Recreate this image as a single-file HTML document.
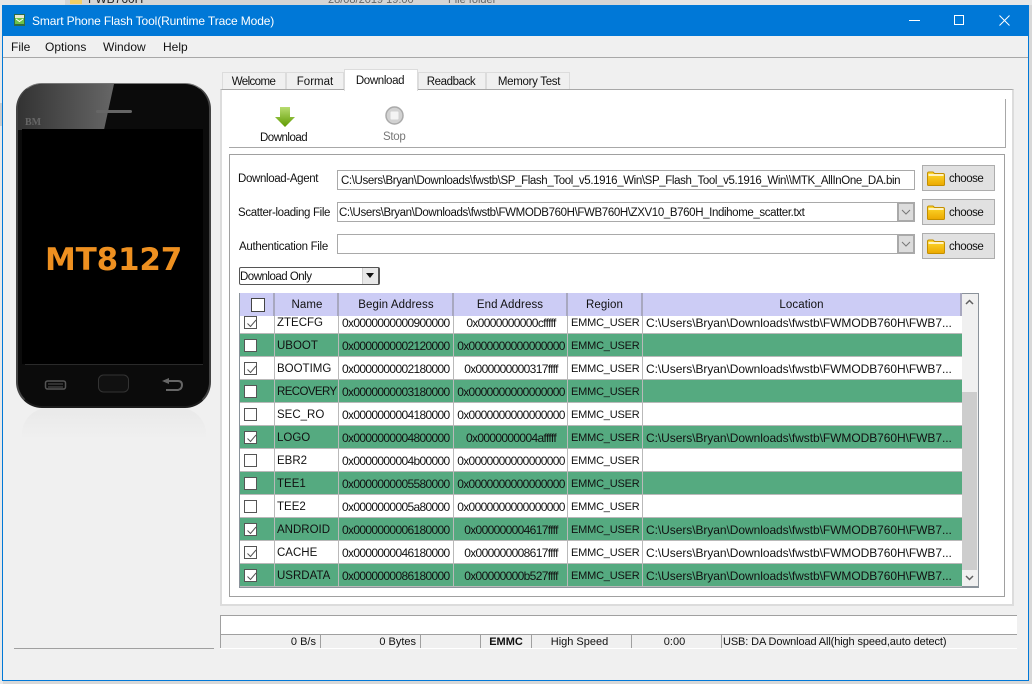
<!DOCTYPE html>
<html><head><meta charset="utf-8"><style>
html,body{margin:0;padding:0;width:1032px;height:684px;overflow:hidden;background:#d8d8d8;font-family:"Liberation Sans",sans-serif;font-size:12px;color:#111}
div,span,svg{position:absolute;box-sizing:border-box}
.t{white-space:nowrap;line-height:14px}
.tab{background:#f0f0f0;border:1px solid #dcdcdc;border-bottom:none;text-align:center;line-height:18px;font-size:11.5px;top:72px;height:17px}
.in{background:#fff;border:1px solid #a9a9a9;height:20px;left:337px;width:578px;line-height:20px;padding-left:3px;white-space:nowrap;overflow:hidden;font-size:11.5px;letter-spacing:-.38px}
.dd{left:897px;width:18px;background:#dcdcdc;border:2px solid #a9a9a9;height:20px}
.btn{left:922px;width:73px;height:26px;background:#e1e1e1;border:1px solid #adadad;line-height:27px;padding-left:26px;font-size:11.5px;letter-spacing:-.45px}
.r{left:0;width:722px;height:23px;background:#fff;border-bottom:1px solid #b9b9b9}
.g{background:#55aa80}
.r span{top:1px;line-height:22px;white-space:nowrap;height:22px}
.n{left:37px;font-size:11.5px}.b{left:102px;letter-spacing:-.66px;font-size:12px}.e{left:216px;width:110px;text-align:center;letter-spacing:-.66px;font-size:12px}.m{left:331px;font-size:11px;letter-spacing:-.2px}.l{left:406px;font-size:12px;letter-spacing:-.06px}
.c{left:34px;width:1px;height:22px;background:#b9b9b9}
.x{left:4px;top:5px;width:13px;height:13px;background:#fff;border:1px solid #555}
.x svg{left:1px;top:1px}
.h{top:293px;height:23px;background:#ccccf5;border-right:2px solid #a8a8c0;text-align:center;line-height:25px;font-size:11.5px;letter-spacing:.1px}
.s{top:634px;height:14px;background:#f0f0f0;border-top:1px solid #a0a0a0;border-left:1px solid #a0a0a0;line-height:15px;font-size:11px;white-space:nowrap;text-align:right;padding-right:4px}
.lb{font-size:11.5px;letter-spacing:-.35px}
</style></head><body>
<div style="left:0;top:0;width:1032px;height:5px;background:#e6e6e6"></div>
<div style="left:65px;top:0;width:575px;height:5px;background:#d5d5d5"></div>
<div class="t" style="left:88px;top:-8px;font-size:12px;color:#222">FWB760H</div>
<div class="t" style="left:328px;top:-7px;font-size:11px;color:#666">28/08/2019 19:00</div>
<div class="t" style="left:448px;top:-7px;font-size:11px;color:#666">File folder</div>
<div style="left:70px;top:0;width:12px;height:4px;background:#f2cf66"></div>

<div style="left:0;top:5px;width:3px;height:679px;background:#e8e8e8"></div>
<div style="left:0;top:103px;width:2px;height:23px;background:#ccc"></div>
<div style="left:2px;top:5px;width:1027px;height:676px;background:#f0f0f0;border:1px solid #0078d7"></div>
<div style="left:2px;top:5px;width:1027px;height:31px;background:#0078d7"></div>
<svg style="left:13px;top:13px" width="14" height="14" viewBox="0 0 14 14"><rect x="1" y="1" width="11" height="12" fill="#2f6b45"/><rect x="2" y="2" width="9" height="3" fill="#e8e8d0"/><rect x="2" y="5" width="9" height="6" fill="#6cc24a"/><path d="M3 6l3.500 2.500L10 6" stroke="#fff" fill="none"/></svg>
<div class="t" style="left:32px;top:14px;color:#fff;font-size:12px;letter-spacing:-.12px">Smart Phone Flash Tool(Runtime Trace Mode)</div>
<div style="left:909px;top:20px;width:11px;height:1px;background:#fff"></div>
<div style="left:954px;top:15px;width:10px;height:10px;border:1px solid #fff"></div>
<svg style="left:999px;top:15px" width="11" height="11" viewBox="0 0 11 11"><path d="M.500.500l10 10M10.500.500l-10 10" stroke="#fff" fill="none"/></svg>
<div style="left:3px;top:36px;width:1025px;height:22px;background:#f0f0f0;border-bottom:1px solid #a8a8a8"></div>
<div class="t" style="left:11px;top:40px;font-size:12px">File</div>
<div class="t" style="left:45px;top:40px;font-size:12px">Options</div>
<div class="t" style="left:103px;top:40px;font-size:12px">Window</div>
<div class="t" style="left:163px;top:40px;font-size:12px">Help</div>

<!-- phone -->
<div style="left:22px;top:408px;width:184px;height:40px;border-radius:26px 26px 0 0;background:linear-gradient(#e9e9e9,#f0f0f0 80%)"></div>
<div style="left:16px;top:83px;width:195px;height:325px;background:#0b0b0b;border-radius:26px;border:1px solid #3c3c3c;border-top:1px solid #777;border-left:2px solid #444;border-right:2px solid #444;border-bottom:2px solid #1c1c1c;overflow:hidden">
<svg style="left:0;top:0" width="125" height="46"><defs><linearGradient id="pg" x1="0" x2="1" y1="0" y2="0"><stop offset="0" stop-color="#333"/><stop offset="1" stop-color="#666"/></linearGradient></defs><polygon points="0,0 96,0 86,46 0,46" fill="url(#pg)"/></svg>
<div style="left:78px;top:26px;width:36px;height:3px;border-radius:2px;background:#666"></div>
</div>
<div class="t" style="left:25px;top:116px;font-family:'Liberation Serif',serif;font-size:10px;color:#666;font-weight:bold">BM</div>
<div style="left:22px;top:129px;width:181px;height:235px;background:#000"></div>
<div style="left:25px;top:364px;width:178px;height:1px;background:#2a2a2a"></div>
<div class="t" style="left:45px;top:244px;font-size:31px;line-height:32px;font-weight:bold;color:#ee9020;font-family:'DejaVu Sans',sans-serif;letter-spacing:-.2px">MT8127</div>
<svg style="left:40px;top:374px" width="150" height="24" viewBox="0 0 150 24" fill="none"><rect x="5.500" y="7" width="20" height="8" rx="2" stroke="#555" stroke-width="1.500"/><path d="M8 10h15M8 13h15" stroke="#555"/><rect x="58.500" y="1" width="30" height="17" rx="5" stroke="#333" fill="#111"/><path d="M124 7h14q4 0 4 4t-4 5h-12" stroke="#666" stroke-width="2"/><path d="M122 7l7-3v6z" fill="#666"/></svg>

<!-- tabs -->
<div style="left:220px;top:89px;width:794px;height:517px;background:#fff;border:2px solid #dcdcdc;border-top:1px solid #a8a8a8"></div>
<div class="tab" style="left:222px;width:64px;letter-spacing:-.6px;padding-right:1px">Welcome</div>
<div class="tab" style="left:286px;width:58px">Format</div>
<div class="tab" style="left:344px;width:74px;top:69px;height:22px;background:#fff;line-height:22px;border-right:1px solid #dcdcdc;letter-spacing:-.35px;padding-right:2px">Download</div>
<div class="tab" style="left:418px;width:68px;letter-spacing:-.4px;padding-right:2px">Readback</div>
<div class="tab" style="left:486px;width:84px;letter-spacing:-.3px;padding-left:2px">Memory Test</div>

<!-- toolbar -->
<div style="left:1005px;top:99px;width:1px;height:49px;background:#a8a8a8"></div>
<div style="left:229px;top:147px;width:777px;height:1px;background:#a8a8a8"></div>
<svg style="left:275px;top:106px" width="20" height="22" viewBox="0 0 20 22"><defs><linearGradient id="ga" x1="0" x2="0" y1="0" y2="1"><stop offset="0" stop-color="#b8dc70"/><stop offset="1" stop-color="#5f9a00"/></linearGradient></defs><path d="M5 1h10v10h5L10 21 0 11h5z" fill="url(#ga)"/></svg>
<div class="t" style="left:260px;top:131px;font-size:11.500px;letter-spacing:-.5px">Download</div>
<svg style="left:385px;top:106px" width="20" height="20" viewBox="0 0 20 20"><circle cx="9.500" cy="9.500" r="8.500" fill="#d2d2d2" stroke="#aaa" stroke-width="1.500"/><rect x="5.500" y="5.500" width="8" height="8" rx="1" fill="#f4f4f4"/></svg>
<div class="t" style="left:383px;top:130px;font-size:11.500px;color:#777;letter-spacing:-.3px">Stop</div>

<!-- group -->
<div style="left:229px;top:154px;width:776px;height:443px;border:1px solid #a0a0a0"></div>
<div class="t lb" style="left:238px;top:172px">Download-Agent</div>
<div class="t lb" style="left:238px;top:206px">Scatter-loading File</div>
<div class="t lb" style="left:239px;top:240px;letter-spacing:-.3px">Authentication File</div>
<div class="in" style="top:170px">C:\Users\Bryan\Downloads\fwstb\SP_Flash_Tool_v5.1916_Win\SP_Flash_Tool_v5.1916_Win\\MTK_AllInOne_DA.bin</div>
<div class="in" style="top:202px;padding-left:1px">C:\Users\Bryan\Downloads\fwstb\FWMODB760H\FWB760H\ZXV10_B760H_Indihome_scatter.txt</div>
<div class="in" style="top:234px"></div>
<div class="dd" style="top:202px"></div><svg style="left:901px;top:209px" width="10" height="6"><path d="M1 1l4 4 4-4" stroke="#777" fill="none"/></svg>
<div class="dd" style="top:234px"></div><svg style="left:901px;top:241px" width="10" height="6"><path d="M1 1l4 4 4-4" stroke="#777" fill="none"/></svg>
<div class="btn" style="top:165px">choose</div>
<div class="btn" style="top:199px">choose</div>
<div class="btn" style="top:233px">choose</div>
<svg width="0" height="0"><defs><linearGradient id="fo" x1="0" x2="0" y1="0" y2="1"><stop offset="0" stop-color="#ffdc30"/><stop offset="1" stop-color="#eba800"/></linearGradient></defs></svg>
<svg style="left:927px;top:171px" width="18" height="15" viewBox="0 0 18 15"><path d="M.500 2.500q0-1.500 1.500-1.500h4l1.500 1.500H16q1.500 0 1.500 1.500v9.500q0 1-1 1H1.500q-1 0-1-1z" fill="url(#fo)" stroke="#c48f00"/><rect x="1.500" y="3" width="15" height="2" fill="#fff2c0"/></svg>
<svg style="left:927px;top:205px" width="18" height="15" viewBox="0 0 18 15"><path d="M.500 2.500q0-1.500 1.500-1.500h4l1.500 1.500H16q1.500 0 1.500 1.500v9.500q0 1-1 1H1.500q-1 0-1-1z" fill="url(#fo)" stroke="#c48f00"/><rect x="1.500" y="3" width="15" height="2" fill="#fff2c0"/></svg>
<svg style="left:927px;top:239px" width="18" height="15" viewBox="0 0 18 15"><path d="M.500 2.500q0-1.500 1.500-1.500h4l1.500 1.500H16q1.500 0 1.500 1.500v9.500q0 1-1 1H1.500q-1 0-1-1z" fill="url(#fo)" stroke="#c48f00"/><rect x="1.500" y="3" width="15" height="2" fill="#fff2c0"/></svg>

<div style="left:239px;top:267px;width:141px;height:18px;background:#fff;border:1px solid #555;border-right:2px solid #555;border-radius:2px;line-height:18px;font-size:11.500px;letter-spacing:-.5px;overflow:hidden">Download Only
<div style="right:0;top:0;width:16px;height:16px;background:#e8e8e8;border-left:1px solid #ccc"></div></div>
<svg style="left:365px;top:273px" width="10" height="6"><path d="M1 0h8L5 5z" fill="#111"/></svg>

<!-- table -->
<div style="left:239px;top:293px;width:740px;height:295px;background:#f0f0f0;border:2px solid #8a929a;border-width:1px 1px 2px 1px"></div>
<div class="h" style="left:240px;width:35px"></div>
<div style="left:251px;top:298px;width:14px;height:14px;background:#fff;border:1px solid #444"></div>
<div class="h" style="left:275px;width:64px;padding-left:2px">Name</div>
<div class="h" style="left:339px;width:115px;padding-left:1px">Begin Address</div>
<div class="h" style="left:454px;width:114px">End Address</div>
<div class="h" style="left:568px;width:75px">Region</div>
<div class="h" style="left:643px;width:319px">Location</div>

<div style="left:240px;top:316px;width:722px;height:271px;overflow:hidden">

<div class="r" style="top:-5px"><div class="x"><svg width="11" height="11"><path d="M1.500 5.500l3 3 5.500-6.500" stroke="#555" fill="none"/></svg></div><div class="c"></div><span class="n">ZTECFG</span><span class="b">0x0000000000900000</span><span class="e">0x0000000000cfffff</span><span class="m">EMMC_USER</span><span class="l">C:\Users\Bryan\Downloads\fwstb\FWMODB760H\FWB7...</span></div>

<div class="r g" style="top:18px"><div class="x"></div><div class="c"></div><span class="n">UBOOT</span><span class="b">0x0000000002120000</span><span class="e">0x0000000000000000</span><span class="m">EMMC_USER</span></div>

<div class="r" style="top:41px"><div class="x"><svg width="11" height="11"><path d="M1.500 5.500l3 3 5.500-6.500" stroke="#555" fill="none"/></svg></div><div class="c"></div><span class="n">BOOTIMG</span><span class="b">0x0000000002180000</span><span class="e">0x000000000317ffff</span><span class="m">EMMC_USER</span><span class="l">C:\Users\Bryan\Downloads\fwstb\FWMODB760H\FWB7...</span></div>

<div class="r g" style="top:64px"><div class="x"></div><div class="c"></div><span class="n" style="letter-spacing:-.6px">RECOVERY</span><span class="b">0x0000000003180000</span><span class="e">0x0000000000000000</span><span class="m">EMMC_USER</span></div>

<div class="r" style="top:87px"><div class="x"></div><div class="c"></div><span class="n">SEC_RO</span><span class="b">0x0000000004180000</span><span class="e">0x0000000000000000</span><span class="m">EMMC_USER</span></div>

<div class="r g" style="top:110px"><div class="x"><svg width="11" height="11"><path d="M1.500 5.500l3 3 5.500-6.500" stroke="#555" fill="none"/></svg></div><div class="c"></div><span class="n">LOGO</span><span class="b">0x0000000004800000</span><span class="e">0x0000000004afffff</span><span class="m">EMMC_USER</span><span class="l">C:\Users\Bryan\Downloads\fwstb\FWMODB760H\FWB7...</span></div>

<div class="r" style="top:133px"><div class="x"></div><div class="c"></div><span class="n">EBR2</span><span class="b">0x0000000004b00000</span><span class="e">0x0000000000000000</span><span class="m">EMMC_USER</span></div>

<div class="r g" style="top:156px"><div class="x"></div><div class="c"></div><span class="n">TEE1</span><span class="b">0x0000000005580000</span><span class="e">0x0000000000000000</span><span class="m">EMMC_USER</span></div>

<div class="r" style="top:179px"><div class="x"></div><div class="c"></div><span class="n">TEE2</span><span class="b">0x0000000005a80000</span><span class="e">0x0000000000000000</span><span class="m">EMMC_USER</span></div>

<div class="r g" style="top:202px"><div class="x"><svg width="11" height="11"><path d="M1.500 5.500l3 3 5.500-6.500" stroke="#555" fill="none"/></svg></div><div class="c"></div><span class="n">ANDROID</span><span class="b">0x0000000006180000</span><span class="e">0x000000004617ffff</span><span class="m">EMMC_USER</span><span class="l">C:\Users\Bryan\Downloads\fwstb\FWMODB760H\FWB7...</span></div>

<div class="r" style="top:225px"><div class="x"><svg width="11" height="11"><path d="M1.500 5.500l3 3 5.500-6.500" stroke="#555" fill="none"/></svg></div><div class="c"></div><span class="n">CACHE</span><span class="b">0x0000000046180000</span><span class="e">0x000000008617ffff</span><span class="m">EMMC_USER</span><span class="l">C:\Users\Bryan\Downloads\fwstb\FWMODB760H\FWB7...</span></div>

<div class="r g" style="top:248px"><div class="x"><svg width="11" height="11"><path d="M1.500 5.500l3 3 5.500-6.500" stroke="#555" fill="none"/></svg></div><div class="c"></div><span class="n">USRDATA</span><span class="b">0x0000000086180000</span><span class="e">0x00000000b527ffff</span><span class="m">EMMC_USER</span><span class="l">C:\Users\Bryan\Downloads\fwstb\FWMODB760H\FWB7...</span></div>

<div style="left:98px;top:0;width:1px;height:271px;background:#b9b9b9"></div>
<div style="left:213px;top:0;width:1px;height:271px;background:#b9b9b9"></div>
<div style="left:327px;top:0;width:1px;height:271px;background:#b9b9b9"></div>
<div style="left:402px;top:0;width:1px;height:271px;background:#b9b9b9"></div>
</div>

<!-- scrollbar -->
<div style="left:962px;top:392px;width:15px;height:178px;background:#cdcdcd"></div>
<svg style="left:965px;top:299px" width="9" height="6"><path d="M1 5l3.500-3.500L8 5" stroke="#606060" stroke-width="1.500" fill="none"/></svg>
<svg style="left:965px;top:575px" width="9" height="6"><path d="M1 1l3.500 3.500L8 1" stroke="#606060" stroke-width="1.500" fill="none"/></svg>

<!-- status -->
<div style="left:220px;top:615px;width:797px;height:20px;background:#fff;border-top:1px solid #a0a0a0;border-left:1px solid #a0a0a0"></div>
<div style="left:220px;top:648px;width:797px;height:1px;background:#fff"></div>
<div class="s" style="left:220px;width:100px">0 B/s</div>
<div class="s" style="left:320px;width:100px">0 Bytes</div>
<div class="s" style="left:420px;width:60px"></div>
<div class="s" style="left:480px;width:51px;text-align:center;font-weight:bold;padding:0">EMMC</div>
<div class="s" style="left:531px;width:100px;text-align:center;padding:0 4px 0 0">High Speed</div>
<div class="s" style="left:631px;width:90px;text-align:center;padding:0 4px 0 0">0:00</div>
<div class="s" style="left:721px;width:296px;text-align:left;padding:0 0 0 1px;letter-spacing:-.12px">USB: DA Download All(high speed,auto detect)</div>
<div style="left:14px;top:648px;width:200px;height:1px;background:#a0a0a0"></div>
</body></html>
